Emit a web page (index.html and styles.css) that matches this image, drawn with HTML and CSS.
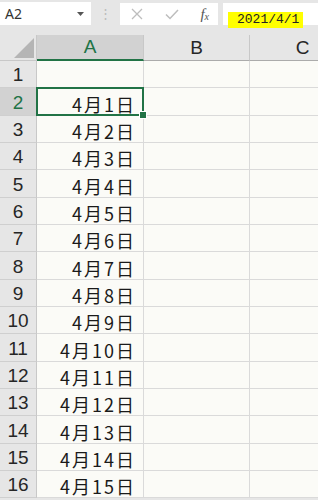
FILE: index.html
```html
<!DOCTYPE html>
<html lang="ja">
<head>
    <meta charset="UTF-8">
    <meta name="viewport" content="width=device-width, initial-scale=1.0">
    <title>日付の連続データ</title>
    <link rel="stylesheet" href="styles.css">
</head>
<body>
    <div class="toolbar">
        <div class="name-box">
            <span>A2</span>
            <svg class="caret" width="7" height="4" viewBox="0 0 7 4"><path d="M0 0h7L3.5 4z" fill="#555"/></svg>
        </div>
        <div class="grip">⋮</div>
        <div class="fx-box">
            <svg width="12" height="12" viewBox="0 0 12 12"><path d="M1 1l10 10M11 1L1 11" stroke="#bdbdbd" stroke-width="1.3" fill="none"/></svg>
            <svg width="14" height="12" viewBox="0 0 14 12"><path d="M1 6.5l4 4L13 2" stroke="#bdbdbd" stroke-width="1.5" fill="none"/></svg>
            <span class="fx">f<sub>x</sub></span>
        </div>
        <div class="formula">
            <span class="mark">2021/4/1</span>
        </div>
    </div>

    <div class="sheet">
        <div class="corner"><div class="tri"></div></div>
        <div class="col-head active">A</div>
        <div class="col-head">B</div>
        <div class="col-head">C</div>
    </div>
    <div class="sheet" id="rows"></div>

    <script src="script.js"></script>
</body>
</html>
```

FILE: styles.css
```css
* {
    margin: 0;
    padding: 0;
    box-sizing: border-box;
}

body {
    font-family: 'Noto Sans', 'Noto Sans CJK JP', sans-serif;
    background: #e6e6e6;
    width: 318px;
    height: 500px;
    overflow: hidden;
}

/* 数式バー */
.toolbar {
    display: flex;
    align-items: flex-start;
    height: 35px;
    padding-top: 2px;
}

.name-box {
    width: 91px;
    height: 23px;
    background: #fff;
    display: flex;
    align-items: center;
    justify-content: space-between;
    padding: 0 7px 0 5px;
    font-size: 14px;
    color: #333;
}

.grip {
    width: 29px;
    text-align: center;
    color: #bbb;
    font-size: 13px;
    line-height: 23px;
}

.fx-box {
    width: 98px;
    height: 22px;
    margin-top: 1px;
    background: #fff;
    display: flex;
    align-items: center;
    justify-content: space-between;
    padding: 0 9px 0 11px;
}

.fx {
    font-family: 'Liberation Serif', serif;
    font-style: italic;
    font-size: 15px;
    color: #555;
}

.fx sub {
    font-size: 10px;
    vertical-align: -1px;
}

.formula {
    flex: 1;
    height: 22px;
    margin: 1px 0 0 5px;
    background: #fff;
    padding: 3px 0 0 5px;
}

.mark {
    display: inline-block;
    background: #ffff00;
    font-family: 'Liberation Mono', monospace;
    font-size: 13px;
    line-height: 16px;
    padding: 0 4px 0 9px;
    color: #222;
}

/* シート */
.sheet {
    display: grid;
    grid-template-columns: 37px 107px 106px 106px;
    width: 318px;
    overflow: hidden;
}

.corner {
    height: 26px;
    background: #e6e6e6;
    border-right: 1px solid #c8c8c8;
    border-bottom: 1px solid #c8c8c8;
    padding: 3px 2px 3px 14px;
}

.tri {
    width: 20px;
    height: 20px;
    background: #b5b5b5;
    clip-path: polygon(100% 0, 100% 100%, 0 100%);
}

.col-head {
    height: 26px;
    background: #e6e6e6;
    border-right: 1px solid #c8c8c8;
    border-bottom: 1px solid #ababab;
    text-align: center;
    font-family: 'Liberation Sans', sans-serif;
    font-size: 19px;
    line-height: 25px;
    color: #262626;
}

.col-head.active {
    background: #d2d2d2;
    color: #217346;
    border-bottom: 2px solid #217346;
    line-height: 24px;
}

.row-head {
    height: 27.33px;
    background: #e6e6e6;
    border-right: 1px solid #c8c8c8;
    border-bottom: 1px solid #cfcfcf;
    font-family: 'Liberation Sans', sans-serif;
    font-size: 19px;
    line-height: 1;
    color: #262626;
    display: flex;
    align-items: flex-end;
    justify-content: center;
    padding-bottom: 3px;
}

.row-head.active {
    background: #d2d2d2;
    color: #217346;
}

.cell {
    height: 27.33px;
    background: #fbfbf7;
    border-right: 1px solid #dadada;
    border-bottom: 1px solid #dadada;
    font-family: 'Noto Sans CJK JP', sans-serif;
    font-size: 18px;
    line-height: 1;
    letter-spacing: 2px;
    color: #1a1a1a;
    display: flex;
    align-items: flex-end;
    justify-content: flex-end;
    padding: 0 7px 2px 0;
}

.cell.selected {
    position: relative;
}

.cell.selected::after {
    content: '';
    position: absolute;
    left: -1px;
    top: -1px;
    right: -1px;
    bottom: -1px;
    border: 2px solid #217346;
}

.cell.selected::before {
    content: '';
    position: absolute;
    right: -4px;
    bottom: -4px;
    width: 6px;
    height: 6px;
    background: #217346;
    border: 1px solid #fff;
    z-index: 1;
}
```

FILE: script.js
```js
// 行を生成
const rows = document.getElementById('rows');

for (let i = 1; i <= 16; i++) {
    const head = document.createElement('div');
    head.className = 'row-head' + (i === 2 ? ' active' : '');
    head.textContent = i;
    rows.appendChild(head);

    const a = document.createElement('div');
    a.className = 'cell' + (i === 2 ? ' selected' : '');
    if (i > 1) a.textContent = '4月' + (i - 1) + '日';
    rows.appendChild(a);

    rows.appendChild(Object.assign(document.createElement('div'), { className: 'cell' }));
    rows.appendChild(Object.assign(document.createElement('div'), { className: 'cell' }));
}
```
